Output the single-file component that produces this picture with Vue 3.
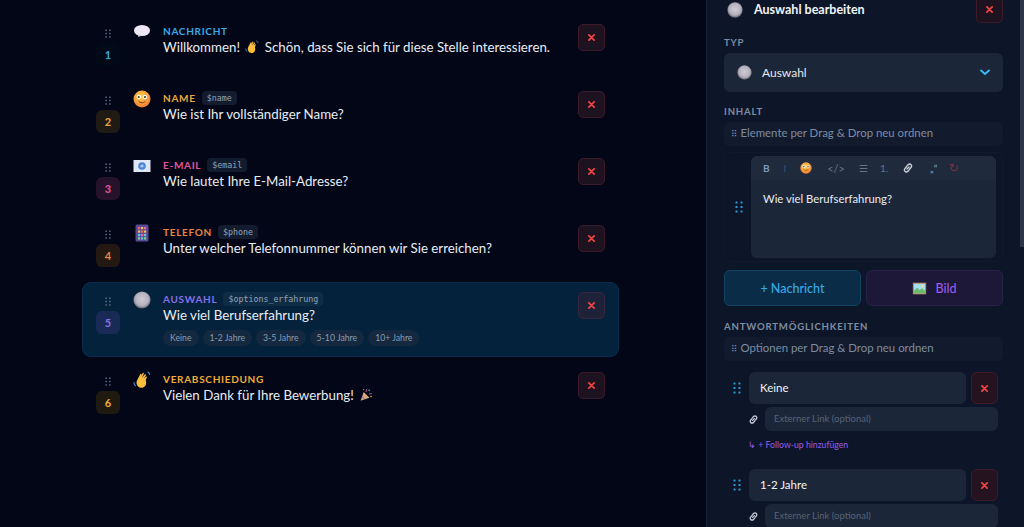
<template>
  <div class="page">
    <svg class="defs" aria-hidden="true">
      <defs>
        <radialGradient id="gSmile" cx="45%" cy="35%" r="70%">
          <stop offset="0" stop-color="#fcd34d" />
          <stop offset="1" stop-color="#f2762e" />
        </radialGradient>
        <radialGradient id="gRadio" cx="50%" cy="45%" r="55%">
          <stop offset="0" stop-color="#cfccd6" />
          <stop offset="0.7" stop-color="#b4b0bd" />
          <stop offset="0.86" stop-color="#8a8693" />
          <stop offset="1" stop-color="#5e5b66" />
        </radialGradient>
      </defs>
      <symbol id="i-bubble" viewBox="0 0 18 18">
        <ellipse cx="9" cy="7.500" rx="8" ry="5.600" fill="#ece6f5" />
        <path d="M5 11.500l.4 2.600L9 12.500z" fill="#d8d0e6" />
      </symbol>
      <symbol id="i-smile" viewBox="0 0 18 18">
        <circle cx="9" cy="9" r="8.500" fill="url(#gSmile)" />
        <circle cx="5.800" cy="7" r="2.200" fill="#fff" />
        <circle cx="12" cy="7" r="2.200" fill="#fff" />
        <circle cx="5.800" cy="7" r="1.100" fill="#5b3412" />
        <circle cx="12" cy="7" r="1.100" fill="#5b3412" />
        <path d="M5.800 11.400c1.500 1.800 4.700 1.800 6.300 0" stroke="#7a3a10" stroke-width="1" fill="none" stroke-linecap="round" />
      </symbol>
      <symbol id="i-mail" viewBox="0 0 18 18">
        <rect x="0.500" y="3" width="17" height="12" fill="#dfe6f5" />
        <circle cx="9" cy="9" r="3.800" fill="#4a86d8" />
        <circle cx="9" cy="9" r="1.600" fill="#b6cdf0" />
      </symbol>
      <symbol id="i-phone" viewBox="0 0 18 18">
        <rect x="2.500" y="0.500" width="13" height="17" rx="1.500" fill="#5b4a96" />
        <g>
          <rect x="5" y="3" width="2.200" height="2.200" fill="#ef6a5a" />
          <rect x="8" y="3" width="2.200" height="2.200" fill="#f2c14a" />
          <rect x="11" y="3" width="2.200" height="2.200" fill="#e56ca8" />
          <rect x="5" y="6.500" width="2.200" height="2.200" fill="#f2c14a" />
          <rect x="8" y="6.500" width="2.200" height="2.200" fill="#ef6a5a" />
          <rect x="11" y="6.500" width="2.200" height="2.200" fill="#f2c14a" />
          <rect x="5" y="10" width="2.200" height="2.200" fill="#5ec8e0" />
          <rect x="8" y="10" width="2.200" height="2.200" fill="#e56ca8" />
          <rect x="11" y="10" width="2.200" height="2.200" fill="#5ec8e0" />
          <rect x="5" y="13.300" width="2.200" height="2.200" fill="#7dd38a" />
          <rect x="8" y="13.300" width="2.200" height="2.200" fill="#5ec8e0" />
          <rect x="11" y="13.300" width="2.200" height="2.200" fill="#7dd38a" />
        </g>
      </symbol>
      <symbol id="i-radio" viewBox="0 0 18 18">
        <circle cx="9" cy="9" r="8.600" fill="url(#gRadio)" />
      </symbol>
      <symbol id="i-wave" viewBox="0 0 18 18">
        <path d="M4.500 8.400L7.200 3.200c.4-.8 1.500-.3 1.200.5l-1 2.400 2.200-3.900c.5-.8 1.600-.3 1.200.6L9 7l2.700-3.400c.6-.7 1.600 0 1.100.8L10.800 7.600l2-1.800c.7-.6 1.500.3.9 1l-1 2.200c.4 1.200 1 3.600-.4 5.800-1.600 2.400-5.200 2.700-7.200.6C3.300 13.500 3 10.700 4.500 8.400z" fill="#fbbf3c" />
        <path d="M1 11.500c0 1.200.6 2.400 1.400 3.200M15 1.200c.9.500 1.500 1.300 1.700 2.300" stroke="#4a86d8" stroke-width="1.100" fill="none" stroke-linecap="round" />
      </symbol>
      <symbol id="i-party" viewBox="0 0 18 18">
        <path d="M2 16.500L6 5l7.500 7.500z" fill="#d8a878" />
        <path d="M4 11l3 3" stroke="#8a6cc8" stroke-width="1.400" />
        <path d="M9 5c.5-1.500 0-2.500 1-3.500M13 8c1.500-1 2.500-.5 3.500-1" stroke="#e56ca8" stroke-width="1.200" fill="none" />
        <circle cx="13" cy="3" r="1" fill="#5ec8e0" />
        <circle cx="15.500" cy="11" r="1" fill="#f2c14a" />
        <circle cx="6" cy="2" r="0.800" fill="#7dd38a" />
      </symbol>
      <symbol id="i-picture" viewBox="0 0 18 18">
        <rect x="1" y="2" width="16" height="14" fill="#b08a5a" />
        <rect x="2.300" y="3.300" width="13.400" height="11.400" fill="#a8dcef" />
        <path d="M2.300 14.700v-3l4-3.500 3 2.500 2.500-2 3.900 3v3z" fill="#6dbb6a" />
        <circle cx="12.500" cy="6" r="1.200" fill="#f7e38a" />
      </symbol>
      <symbol id="i-link" viewBox="0 0 12 12">
        <path d="M5 7l2-2M4.700 4.200l1.400-1.500a1.900 1.900 0 012.900 0 1.900 1.900 0 010 2.800L7.700 6.900M7.300 7.800L5.900 9.300a1.900 1.900 0 01-2.900 0 1.900 1.900 0 010-2.800l1.300-1.400" stroke="#c9ced8" stroke-width="1.400" fill="none" stroke-linecap="round" />
      </symbol>
      <symbol id="i-x" viewBox="0 0 8 8">
        <path d="M1 1l6 6M7 1L1 7" stroke="#ef4444" stroke-width="2" stroke-linecap="round" />
      </symbol>
      <symbol id="i-grip" viewBox="0 0 8 12">
        <g fill="currentColor">
          <rect x="0.500" y="0.500" width="2" height="2" rx="0.500" />
          <rect x="5.500" y="0.500" width="2" height="2" rx="0.500" />
          <rect x="0.500" y="5" width="2" height="2" rx="0.500" />
          <rect x="5.500" y="5" width="2" height="2" rx="0.500" />
          <rect x="0.500" y="9.500" width="2" height="2" rx="0.500" />
          <rect x="5.500" y="9.500" width="2" height="2" rx="0.500" />
        </g>
      </symbol>
    </svg>

    <main class="list">
      <div
        v-for="(row, i) in rows"
        :key="row.label"
        class="row"
        :class="{ active: row.active }"
      >
        <div class="order">
          <svg class="row-grip"><use href="#i-grip" /></svg>
          <span class="num" :class="row.tone">{{ i + 1 }}</span>
        </div>
        <svg class="row-icon"><use :href="'#i-' + row.icon" /></svg>
        <div class="body">
          <div class="head">
            <span class="label" :class="row.tone">{{ row.label }}</span>
            <code v-if="row.variable" class="var">{{ row.variable }}</code>
          </div>
          <div class="text">
            <template v-if="row.wave">
              {{ row.text }}
              <svg class="inline-emoji wave"><use href="#i-wave" /></svg>
              {{ row.rest }}
            </template>
            <template v-else>{{ row.text }}</template>
            <svg v-if="row.party" class="inline-emoji party"><use href="#i-party" /></svg>
          </div>
          <div v-if="row.chips" class="chips">
            <span v-for="chip in row.chips" :key="chip" class="chip">{{ chip }}</span>
          </div>
        </div>
        <button class="del"><svg class="x"><use href="#i-x" /></svg></button>
      </div>
    </main>

    <aside class="panel">
      <div class="panel-head">
        <svg class="head-icon"><use href="#i-radio" /></svg>
        <h3>Auswahl bearbeiten</h3>
        <button class="del"><svg class="x"><use href="#i-x" /></svg></button>
      </div>

      <div class="section-label typ">Typ</div>
      <div class="select">
        <svg class="select-icon"><use href="#i-radio" /></svg>
        <span>Auswahl</span>
        <svg class="chev" viewBox="0 0 10 7"><path d="M1 1.500l4 3.500 4-3.500" stroke="#38bdf8" stroke-width="1.800" fill="none" stroke-linecap="round" /></svg>
      </div>

      <div class="section-label inhalt">Inhalt</div>
      <div class="hint first"><span class="braille">⠿</span> Elemente per Drag &amp; Drop neu ordnen</div>

      <div class="editor-row">
        <svg class="blue-grip"><use href="#i-grip" /></svg>
        <div class="editor">
          <div class="toolbar">
            <b class="tb t-bold">B</b>
            <span class="tb t-italic">I</span>
            <svg class="tb-emoji"><use href="#i-smile" /></svg>
            <span class="tb t-code">&lt;/&gt;</span>
            <span class="tb t-list">☰</span>
            <span class="tb t-num">1.</span>
            <svg class="tb-link"><use href="#i-link" /></svg>
            <span class="tb t-quote">„“</span>
            <span class="tb t-undo">↻</span>
          </div>
          <div class="editor-text">Wie viel Berufserfahrung?</div>
        </div>
      </div>

      <div class="add-row">
        <button class="add msg">+ Nachricht</button>
        <button class="add img"><svg class="pic"><use href="#i-picture" /></svg>Bild</button>
      </div>

      <div class="section-label antwort">Antwortmöglichkeiten</div>
      <div class="hint second"><span class="braille">⠿</span> Optionen per Drag &amp; Drop neu ordnen</div>

      <div v-for="(opt, i) in options" :key="opt" class="option">
        <div class="option-main">
          <svg class="blue-grip"><use href="#i-grip" /></svg>
          <div class="option-input">{{ opt }}</div>
          <button class="del tall"><svg class="x"><use href="#i-x" /></svg></button>
        </div>
        <div class="option-link">
          <svg class="link-icon"><use href="#i-link" /></svg>
          <div class="link-input">Externer Link (optional)</div>
        </div>
        <div v-if="i === 0" class="followup">↳ + Follow-up hinzufügen</div>
      </div>

      <div class="scrollbar"></div>
    </aside>
  </div>
</template>

<script setup>
const options = ['Keine', '1-2 Jahre']

const rows = [
  { label: 'NACHRICHT', tone: 'sky', icon: 'bubble', text: 'Willkommen!', wave: true, rest: 'Schön, dass Sie sich für diese Stelle interessieren.' },
  { label: 'NAME', tone: 'amber', icon: 'smile', variable: '$name', text: 'Wie ist Ihr vollständiger Name?' },
  { label: 'E-MAIL', tone: 'pink', icon: 'mail', variable: '$email', text: 'Wie lautet Ihre E-Mail-Adresse?' },
  { label: 'TELEFON', tone: 'orange', icon: 'phone', variable: '$phone', text: 'Unter welcher Telefonnummer können wir Sie erreichen?' },
  {
    label: 'AUSWAHL',
    tone: 'violet',
    icon: 'radio',
    variable: '$options_erfahrung',
    text: 'Wie viel Berufserfahrung?',
    active: true,
    chips: ['Keine', '1-2 Jahre', '3-5 Jahre', '5-10 Jahre', '10+ Jahre']
  },
  { label: 'VERABSCHIEDUNG', tone: 'gold', icon: 'wave', text: 'Vielen Dank für Ihre Bewerbung!', party: true }
]
</script>

<style scoped>
.page {
  display: flex;
  height: 527px;
  overflow: hidden;
  background: #020617;
  color: #e2e8f0;
  font-family: Lato, "Open Sans", sans-serif;
}

.defs {
  position: absolute;
  width: 0;
  height: 0;
}

.list {
  width: 706px;
  flex: none;
  box-sizing: border-box;
  padding: 14px 87px 0 82px;
  display: flex;
  flex-direction: column;
  gap: 5px;
}

.row {
  display: flex;
  align-items: flex-start;
  box-sizing: border-box;
  height: 62px;
  padding: 10px 14px 0;
  border-radius: 9px;
}

.row.active {
  height: 75px;
  background: #04223c;
  box-shadow: inset 0 0 0 1px #062e4a;
}

.order {
  width: 24px;
  flex: none;
  display: flex;
  flex-direction: column;
  align-items: center;
  gap: 5px;
  padding-top: 5px;
}

.row-grip {
  width: 8px;
  height: 9px;
  color: #64748b;
}

.num {
  width: 24px;
  height: 23px;
  border-radius: 6px;
  display: flex;
  align-items: center;
  justify-content: center;
  font-size: 11px;
  font-weight: 700;
}

.sky { color: #38a9e8; }
.amber { color: #eaa93c; }
.pink { color: #e0559a; }
.orange { color: #e9853e; }
.violet { color: #8470e8; }
.gold { color: #efab35; }

.num.sky { background: #020a18; }
.num.amber { background: #1f1a14; }
.num.pink { background: #26122a; }
.num.orange { background: #241812; }
.num.violet { background: #1a2a56; }
.num.gold { background: #1f1a10; }

.row-icon {
  width: 18px;
  height: 18px;
  margin: -1px 12px 0 13px;
  flex: none;
}

.body {
  flex: 1;
  min-width: 0;
}

.head {
  display: flex;
  align-items: center;
  gap: 6px;
  height: 14px;
}

.label {
  font-size: 10px;
  font-weight: 700;
  letter-spacing: 0.7px;
}

.var {
  font-family: "DejaVu Sans Mono", monospace;
  font-size: 8.300px;
  padding: 2px 5px;
  border-radius: 4px;
  background: #131c2e;
  color: #94a3b8;
}

.row.active .var {
  background: #0f2c45;
}

.text {
  font-size: 13.300px;
  line-height: 20px;
  margin-top: -1px;
  white-space: nowrap;
  color: #e8edf4;
}

.inline-emoji {
  width: 14px;
  height: 14px;
  vertical-align: -2px;
}

.wave {
  margin: 0 2px;
}

.party {
  margin-left: 5px;
}

.chips {
  display: flex;
  gap: 4px;
  margin-top: 5px;
}

.chip {
  font-size: 8.700px;
  padding: 3px 7px;
  line-height: 10px;
  border-radius: 8px;
  background: #14293f;
  color: #8a9bb2;
}

.del {
  width: 27px;
  height: 27px;
  flex: none;
  padding: 0;
  display: flex;
  align-items: center;
  justify-content: center;
  border-radius: 5px;
  border: 1px solid #3f1a2b;
  background: #1c1220;
}

.row.active .del {
  background: #1d2238;
  border-color: #3a2540;
}

.x {
  width: 7px;
  height: 7px;
}

.panel {
  position: relative;
  flex: 1;
  box-sizing: border-box;
  padding: 0 21px 0 17px;
  background: #0d1628;
  border-left: 1px solid #1a2437;
  overflow: hidden;
}

.panel-head {
  display: flex;
  align-items: center;
  height: 27px;
  margin-top: -4px;
  padding-left: 3px;
}

.head-icon {
  width: 16px;
  height: 16px;
  margin-right: 11px;
}

h3 {
  flex: 1;
  margin: 0;
  font-size: 12.500px;
  font-weight: 700;
  color: #f1f5f9;
}

.section-label {
  font-size: 9.600px;
  font-weight: 700;
  letter-spacing: 0.8px;
  text-transform: uppercase;
  color: #7e8ca3;
  line-height: 12px;
}

.typ { margin-top: 14px; }
.inhalt { margin-top: 14px; }
.antwort { margin-top: 15px; }

.select {
  display: flex;
  align-items: center;
  height: 39px;
  margin-top: 4px;
  padding: 0 13px;
  border-radius: 6px;
  background: #1b2638;
  font-size: 12px;
}

.select-icon {
  width: 15px;
  height: 15px;
  margin-right: 10px;
}

.select span {
  flex: 1;
}

.chev {
  width: 10px;
  height: 7px;
}

.hint {
  height: 24px;
  padding-left: 7px;
  box-sizing: border-box;
  border-radius: 5px;
  background: #111b2d;
  font-size: 11.400px;
  line-height: 22px;
  color: #7e8ca3;
}

.hint.first { margin-top: 4px; }
.hint.second { margin-top: 4px; }

.braille {
  font-family: "DejaVu Sans", sans-serif;
  font-size: 9px;
}

.editor-row {
  display: flex;
  align-items: center;
  height: 110px;
  margin-top: 6px;
  border-radius: 6px;
  border: 1px solid #101a2c;
  box-sizing: border-box;
  padding-left: 10px;
  gap: 8px;
}

.blue-grip {
  width: 8px;
  height: 12px;
  color: #2d9bd8;
  flex: none;
}

.editor {
  width: 245px;
  height: 102px;
  border-radius: 6px;
  background: #1b2638;
  overflow: hidden;
}

.toolbar {
  display: flex;
  align-items: center;
  height: 24px;
  padding-left: 12px;
  background: #1f2a3d;
  font-size: 10px;
  color: #64748b;
  white-space: nowrap;
}

.t-bold { color: #7d9cc0; }
.t-italic { margin-left: 14px; font-weight: 300; }
.tb-emoji { width: 12px; height: 12px; margin-left: 14px; flex: none; }
.t-code { margin-left: 15px; font-size: 11px; }
.t-list { margin-left: 14px; }
.t-num { margin-left: 12px; }
.tb-link { width: 12px; height: 12px; margin-left: 14px; flex: none; }
.t-quote { margin-left: 16px; color: #94a3b8; }
.t-undo { margin-left: 11px; color: #7d2f40; font-size: 12px; font-family: "DejaVu Sans", sans-serif; }

.editor-text {
  padding: 12px 12px;
  font-size: 11.300px;
  line-height: 14px;
  color: #e8edf4;
}

.add-row {
  display: flex;
  gap: 5px;
  margin-top: 8px;
}

.add {
  flex: 1;
  height: 36px;
  padding: 0;
  border-radius: 6px;
  font-family: inherit;
  font-size: 12.500px;
  font-weight: 500;
  display: flex;
  align-items: center;
  justify-content: center;
}

.msg {
  background: #0a2c47;
  border: 1px solid #11445f;
  color: #38a9e8;
}

.img {
  background: #1d1738;
  border: 1px solid #2a2148;
  color: #9a5be8;
}

.pic {
  width: 15px;
  height: 15px;
  margin-right: 8px;
}

.option {
  margin-top: 11px;
  padding-left: 9px;
  padding-right: 5px;
}

.option + .option {
  margin-top: 19px;
}

.option-main {
  display: flex;
  align-items: center;
  gap: 5px;
}

.option-main .blue-grip {
  margin-right: 3px;
}

.option-input {
  flex: 1;
  height: 32px;
  box-sizing: border-box;
  padding-left: 11px;
  border-radius: 6px;
  background: #1b2638;
  font-size: 11.500px;
  line-height: 31px;
  color: #f1f5f9;
}

.del.tall {
  height: 32px;
  border-radius: 6px;
  background: #25141f;
}

.option-link {
  display: flex;
  align-items: center;
  margin-top: 3px;
  padding-left: 15px;
}

.link-icon {
  width: 11px;
  height: 11px;
  margin-right: 6px;
}

.link-input {
  flex: 1;
  height: 24px;
  box-sizing: border-box;
  padding-left: 9px;
  border-radius: 6px;
  background: #1b2638;
  font-size: 9.500px;
  line-height: 24px;
  color: #566377;
}

.followup {
  margin: 8px 0 0 15px;
  font-size: 8.700px;
  line-height: 11px;
  color: #9a5be8;
}

.scrollbar {
  position: absolute;
  top: 0;
  right: 0;
  width: 4px;
  height: 247px;
  background: #2b3648;
}
</style>

<style>
html,
body {
  margin: 0;
  overflow: hidden;
  background: #020617;
}
</style>
